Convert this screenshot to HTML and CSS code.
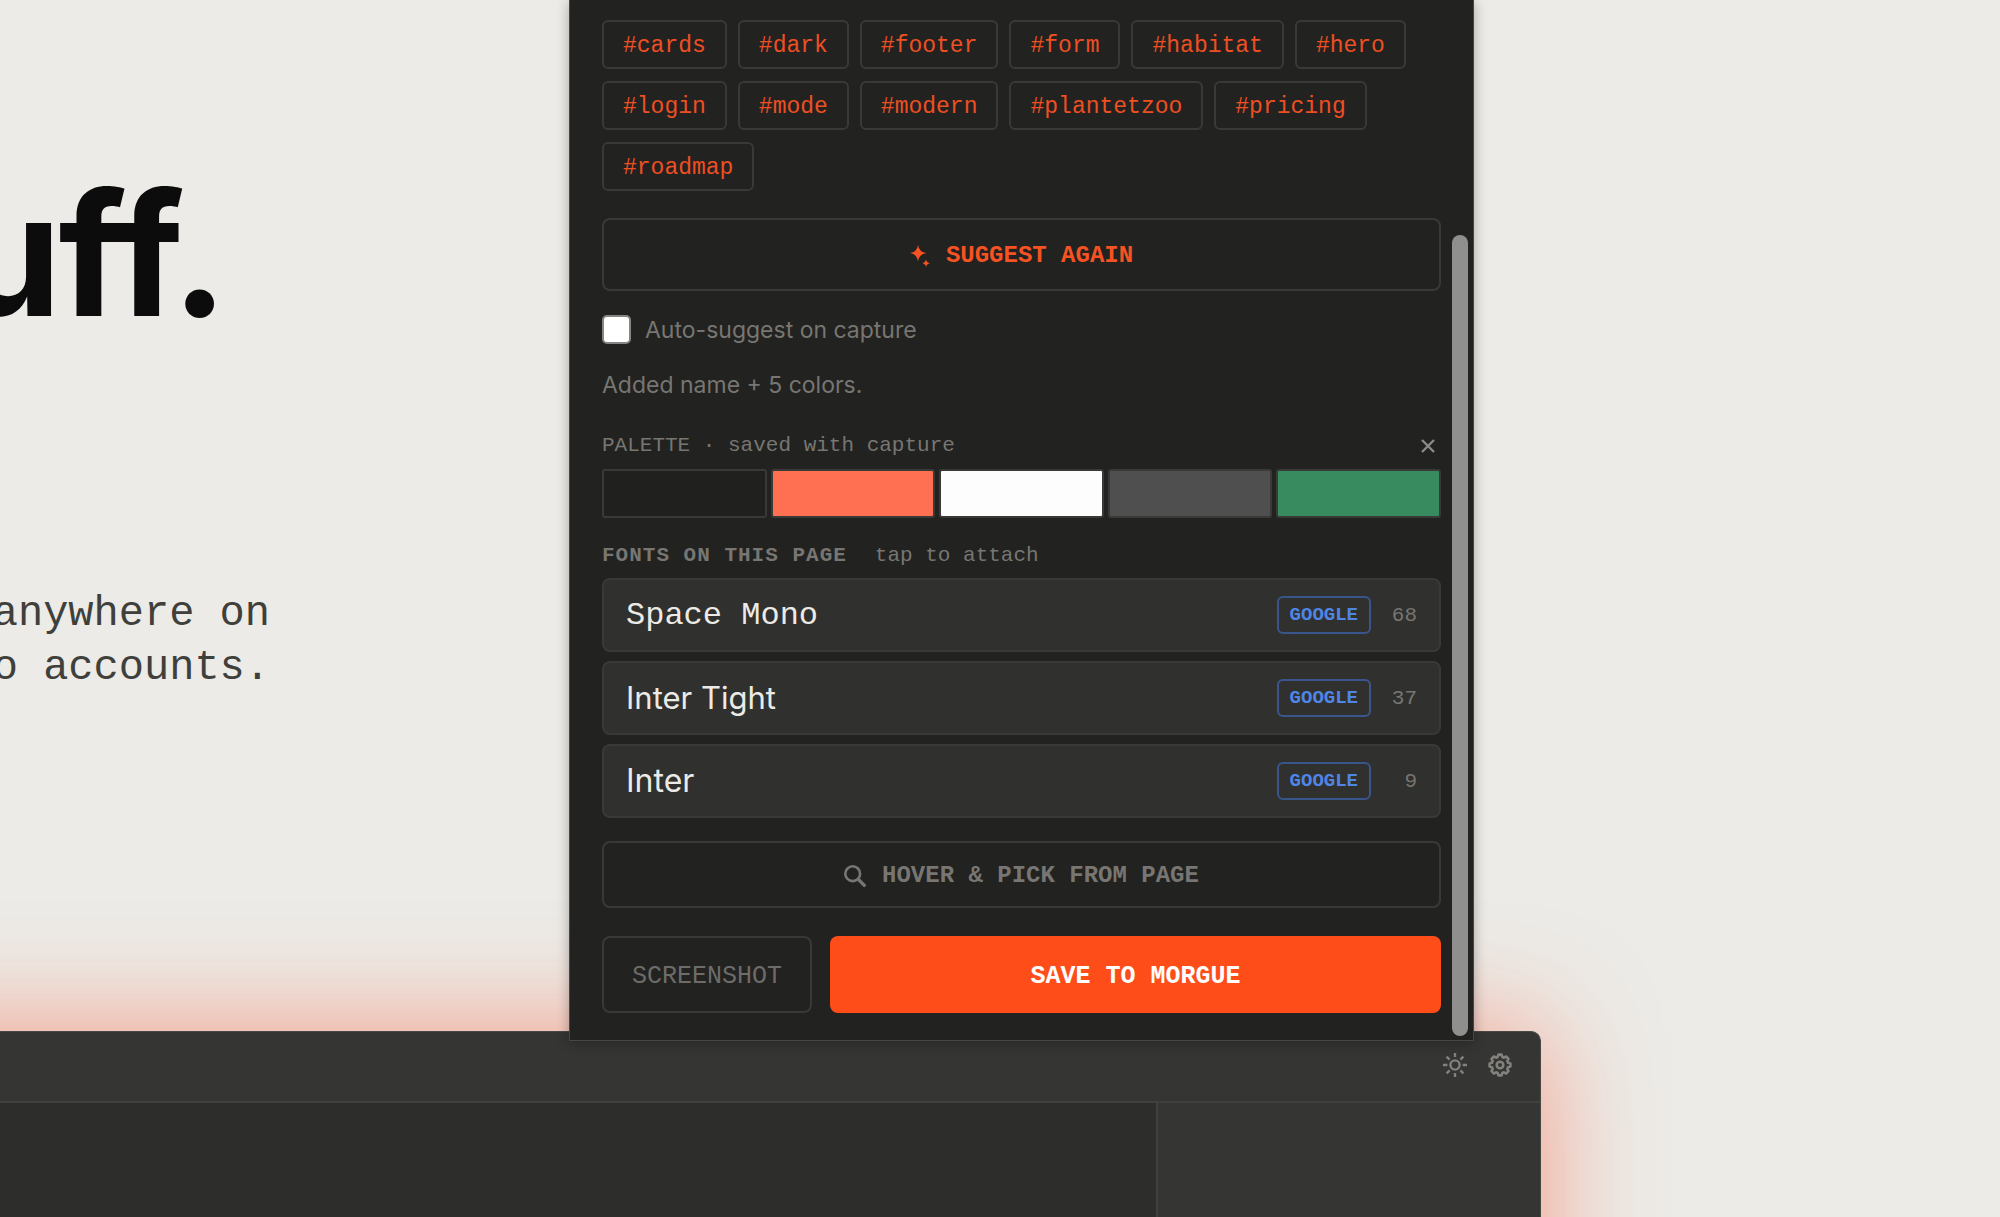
FILE: index.html
```html
<!DOCTYPE html>
<html lang="en">
<head>
<meta charset="utf-8">
<meta name="viewport" content="width=device-width, initial-scale=1">
<title>Morgue</title>
<link rel="stylesheet" href="styles.css">
</head>
<body>
<main class="hero">
  <h1 class="hero-title">uff.</h1>
  <p class="hero-lead">anywhere on<br>o accounts.</p>
</main>

<section class="app" aria-label="Library">
  <header class="app-bar">
    <button class="icon-button" type="button" aria-label="Theme">
      <svg viewBox="0 0 24 24" fill="none" stroke="currentColor" stroke-width="2.4"><circle cx="12" cy="12" r="4.6"/><path d="M12 0v4M12 20v4M0 12h4.4M19.6 12H24M3.6 3.6l3 3M17.4 17.4l3 3M3.6 20.4l3-3M17.4 6.6l3-3"/></svg>
    </button>
    <button class="icon-button" type="button" aria-label="Settings">
      <svg viewBox="0 0 24 24" fill="none" stroke="currentColor" stroke-width="2.6" stroke-linejoin="round"><path d="M10.4 1.6h3.2l.7 2.4 1.6.7 2.2-1.2 2.4 2.4-1.2 2.2.7 1.6 2.4.7v3.2l-2.4.7-.7 1.6 1.2 2.2-2.4 2.4-2.2-1.2-1.6.7-.7 2.4h-3.2L9.7 20l-1.6-.7-2.2 1.2-2.4-2.4 1.2-2.2-.7-1.6-2.4-.7v-3.2l2.4-.7.7-1.6-1.2-2.2 2.4-2.4 2.2 1.2 1.6-.7z"/><circle cx="12" cy="12" r="3.3"/></svg>
    </button>
  </header>
  <div class="app-body">
    <div class="app-canvas"></div>
    <aside class="app-side"></aside>
  </div>
</section>

<section class="panel" aria-label="Capture">
  <div class="tags">
    <button class="tag" type="button">#cards</button>
    <button class="tag" type="button">#dark</button>
    <button class="tag" type="button">#footer</button>
    <button class="tag" type="button">#form</button>
    <button class="tag" type="button">#habitat</button>
    <button class="tag" type="button">#hero</button>
    <button class="tag" type="button">#login</button>
    <button class="tag" type="button">#mode</button>
    <button class="tag" type="button">#modern</button>
    <button class="tag" type="button">#plantetzoo</button>
    <button class="tag" type="button">#pricing</button>
    <button class="tag" type="button">#roadmap</button>
  </div>

  <button class="wide-button suggest" type="button">
    <svg class="spark" viewBox="0 0 20 22" fill="currentColor" aria-hidden="true"><path d="M8 0Q9 7 16.5 8Q9 9 8 16.5Q7 9 0 8Q7 7 8 0ZM16 14.5Q16.6 17.6 20 18.2Q16.6 18.8 16 22Q15.4 18.8 12.5 18.2Q15.4 17.6 16 14.5Z"/></svg>
    SUGGEST AGAIN
  </button>

  <label class="auto"><input type="checkbox" class="auto-box">Auto-suggest on capture</label>
  <p class="status">Added name + 5 colors.</p>

  <div class="label-row palette-label">
    <span>PALETTE · saved with capture</span>
    <button class="clear" type="button" aria-label="Remove palette">
      <svg viewBox="0 0 12 12" stroke="currentColor" stroke-width="2.4" aria-hidden="true"><path d="M0 0l12 12M12 0L0 12"/></svg>
    </button>
  </div>
  <div class="swatches">
    <span class="swatch ink"></span>
    <span class="swatch coral"></span>
    <span class="swatch white"></span>
    <span class="swatch gray"></span>
    <span class="swatch green"></span>
  </div>

  <div class="label-row fonts-label">
    <strong>FONTS ON THIS PAGE</strong>
    <span>tap to attach</span>
  </div>
  <div class="fonts">
    <button class="font" type="button"><span class="font-name mono">Space Mono</span><span class="source">GOOGLE</span><span class="count">68</span></button>
    <button class="font" type="button"><span class="font-name tight">Inter Tight</span><span class="source">GOOGLE</span><span class="count">37</span></button>
    <button class="font" type="button"><span class="font-name">Inter</span><span class="source">GOOGLE</span><span class="count">9</span></button>
  </div>

  <button class="wide-button pick" type="button">
    <svg class="lens" viewBox="0 0 22 22" fill="none" stroke="currentColor" stroke-width="2.6" aria-hidden="true"><circle cx="8.7" cy="8.7" r="7.4"/><path d="M14 14l7.3 7.3" stroke-width="3.2"/></svg>
    HOVER &amp; PICK FROM PAGE
  </button>

  <div class="actions">
    <button class="shot" type="button">SCREENSHOT</button>
    <button class="save" type="button">SAVE TO MORGUE</button>
  </div>
  <div class="thumb"></div>
</section>
</body>
</html>
```
FILE: styles.css
```css
:root {
  --mono: "Liberation Mono", "DejaVu Sans Mono", monospace;
  --sans: Inter, "Liberation Sans", sans-serif;
  --line: #393937;
  --muted: #777672;
  --accent: #ff4d1a;
}

* { box-sizing: border-box; }

body {
  margin: 0;
  height: 100vh;
  position: relative;
  overflow: hidden;
  background: #ecebe7;
  font-family: var(--sans);
}

button {
  margin: 0;
  padding: 0;
  border: 0;
  background: none;
  color: inherit;
  font-family: var(--mono);
  cursor: pointer;
}

svg { display: block; overflow: visible; }

.hero {
  display: flex;
  flex-direction: column;
  padding: 164px 0 336px;
}

.hero-title {
  width: 225px;
  margin: 0;
  display: flex;
  justify-content: flex-end;
  color: #0c0c0c;
  font-size: 170px;
  font-weight: 700;
  font-variant-ligatures: none;
  line-height: 180px;
  letter-spacing: -3px;
}

.hero-lead {
  width: 270px;
  margin: 243px 0 0;
  display: flex;
  justify-content: flex-end;
  white-space: nowrap;
  color: #3f3f3b;
  font-family: var(--mono);
  font-size: 42px;
  line-height: 54px;
}

.app {
  display: flex;
  flex-direction: column;
  width: 87.05%;
  min-height: 800px;
  margin-left: -10%;
  border-top: 1px solid #484846;
  border-right: 1px solid #484846;
  border-radius: 0 10px 0 0;
  background: #353533;
  box-shadow: 0 0 110px rgba(255, 77, 40, .5);
}

.app-bar {
  display: flex;
  justify-content: flex-end;
  align-items: center;
  gap: 21px;
  height: 71px;
  padding: 0 28px 4px 0;
  border-bottom: 2px solid #40403e;
}

.icon-button { color: #82817d; }
.icon-button svg { width: 24px; height: 24px; }

.app-body { flex: 1; display: flex; }
.app-canvas { flex: 1; background: #2d2d2b; }
.app-side { width: 384px; border-left: 2px solid #40403e; }

.panel {
  position: absolute;
  top: 0;
  left: 28.45%;
  width: 45.25%;
  display: flex;
  flex-direction: column;
  padding: 20px 32px 27px;
  border: 1px solid #474745;
  border-top: 0;
  background: #222220;
  box-shadow: 0 2px 12px rgba(0, 0, 0, .3);
}

.tags {
  display: flex;
  flex-wrap: wrap;
  gap: 12px 11px;
}

.tag {
  height: 49px;
  padding: 3px 19px 0;
  border: 2px solid var(--line);
  border-radius: 6px;
  color: #ee4f23;
  font-size: 23px;
}

.wide-button {
  display: flex;
  justify-content: center;
  align-items: center;
  gap: 16px;
  padding-top: 2px;
  border: 2px solid var(--line);
  border-radius: 8px;
  font-size: 24px;
  font-weight: 700;
}

.suggest { height: 73px; margin-top: 27px; color: #f75222; }
.spark { width: 20px; height: 22px; }

.auto {
  display: flex;
  align-items: center;
  gap: 14px;
  height: 29px;
  margin-top: 24px;
  color: var(--muted);
  font-size: 23px;
}

.auto-box {
  appearance: none;
  width: 29px;
  height: 29px;
  margin: 0;
  border: 2px solid #858583;
  border-radius: 5px;
  background: #fff;
}

.status {
  margin: 27px 0 0;
  color: var(--muted);
  font-size: 23px;
  line-height: 28px;
}

.label-row {
  display: flex;
  align-items: center;
  color: var(--muted);
  font-family: var(--mono);
  font-size: 21px;
  line-height: 24px;
}

.palette-label { justify-content: space-between; margin-top: 35px; padding-right: 7px; }
.fonts-label { gap: 28px; margin-top: 26px; }
.fonts-label strong { letter-spacing: 1px; }

.clear svg { width: 12px; height: 12px; color: #8b8a86; }

.swatches {
  display: flex;
  gap: 4px;
  margin-top: 11px;
}

.swatch {
  flex: 1;
  height: 49px;
  border: 2px solid var(--line);
  border-radius: 3px;
}

.ink { background: #20201e; }
.coral { background: #ff7052; }
.white { background: #fdfdfd; }
.gray { background: #4f4f4f; }
.green { background: #378b5f; }

.fonts {
  display: flex;
  flex-direction: column;
  gap: 9px;
  margin-top: 10px;
}

.font {
  display: flex;
  align-items: center;
  height: 74px;
  padding: 0 22px;
  border: 2px solid #393937;
  border-radius: 8px;
  background: #30302e;
}

.font-name {
  flex: 1;
  color: #eceae6;
  font-family: var(--sans);
  font-size: 32px;
  line-height: 36px;
  text-align: left;
}

.mono { padding-top: 2px; font-family: var(--mono); }
.tight { font-size: 31px; }

.source {
  padding: 0 11px;
  border: 2px solid #3a558c;
  border-radius: 6px;
  color: #4f86e6;
  font-size: 19px;
  font-weight: 700;
  line-height: 34px;
}

.count {
  width: 46px;
  color: var(--muted);
  font-size: 21px;
  text-align: right;
}

.pick { height: 67px; margin-top: 23px; color: var(--muted); }
.lens { width: 22px; height: 22px; }

.actions {
  display: flex;
  gap: 18px;
  margin-top: 28px;
}

.shot, .save {
  height: 77px;
  padding-top: 3px;
  border-radius: 8px;
  font-size: 25px;
}

.shot {
  padding-left: 28px;
  padding-right: 28px;
  border: 2px solid var(--line);
  color: #6d6c69;
}

.save {
  flex: 1;
  background: var(--accent);
  color: #fff;
  font-weight: 700;
}

.thumb {
  position: absolute;
  top: 235px;
  right: 5px;
  bottom: 4px;
  width: 16px;
  border-radius: 8px;
  background: #8f8f8d;
}
```
